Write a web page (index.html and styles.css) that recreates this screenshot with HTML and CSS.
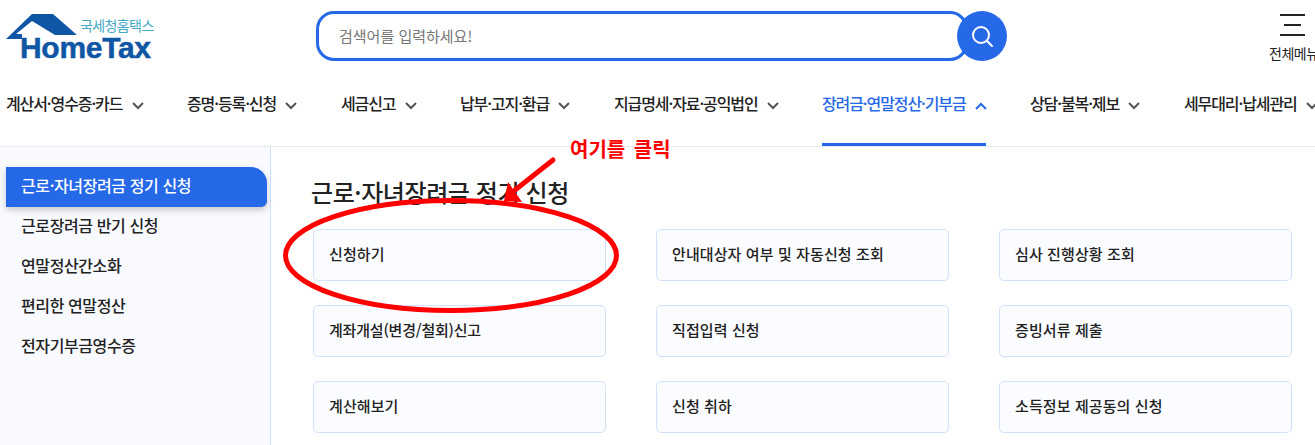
FILE: index.html
```html
<!DOCTYPE html>
<html lang="ko">

<head>
    <meta charset="UTF-8">
    <title>HomeTax</title>
    <link rel="stylesheet" href="styles.css">
</head>

<body>
    <div class="top-bar">
        <div class="logo">
            <svg class="logo-roof" width="72" height="26" viewBox="0 0 72 26">
                <polygon fill="#0f56a4" points="0,25 26,0 47,0 71,21 49,21 26,7 10,20 16,20 16,25"></polygon>
            </svg>
            <span class="logo-sub">국세청홈택스</span>
            <span class="logo-name">HomeTax</span>
        </div>
        <div class="search">
            <div class="search-box">검색어를 입력하세요!</div>
            <div class="search-btn">
                <svg width="24" height="24" viewBox="0 0 24 24" fill="none" stroke="#fff" stroke-width="2">
                    <circle cx="11" cy="11" r="8"></circle>
                    <path d="M17 17l5 5" stroke-linecap="round"></path>
                </svg>
            </div>
        </div>
        <div class="all-menu">
            <div class="burger">
                <span></span>
                <span class="short"></span>
                <span></span>
            </div>
            <div class="all-menu-label">전체메뉴</div>
        </div>
    </div>

    <div class="navigation-bar">
        <a class="nav-item n1">계산서·영수증·카드 <svg class="chev" viewBox="0 0 12 8"><path d="M1 1l5 5 5-5"></path></svg></a>
        <a class="nav-item n2">증명·등록·신청 <svg class="chev" viewBox="0 0 12 8"><path d="M1 1l5 5 5-5"></path></svg></a>
        <a class="nav-item n3">세금신고 <svg class="chev" viewBox="0 0 12 8"><path d="M1 1l5 5 5-5"></path></svg></a>
        <a class="nav-item n4">납부·고지·환급 <svg class="chev" viewBox="0 0 12 8"><path d="M1 1l5 5 5-5"></path></svg></a>
        <a class="nav-item n5">지급명세·자료·공익법인 <svg class="chev" viewBox="0 0 12 8"><path d="M1 1l5 5 5-5"></path></svg></a>
        <a class="nav-item n6 active">장려금·연말정산·기부금 <svg class="chev" viewBox="0 0 12 8"><path d="M1 7l5-5 5 5"></path></svg></a>
        <a class="nav-item n7">상담·불복·제보 <svg class="chev" viewBox="0 0 12 8"><path d="M1 1l5 5 5-5"></path></svg></a>
        <a class="nav-item n8">세무대리·납세관리 <svg class="chev" viewBox="0 0 12 8"><path d="M1 1l5 5 5-5"></path></svg></a>
    </div>

    <div class="container">
        <div class="sidebar">
            <a class="side-item active">근로·자녀장려금 정기 신청</a>
            <a class="side-item">근로장려금 반기 신청</a>
            <a class="side-item">연말정산간소화</a>
            <a class="side-item">편리한 연말정산</a>
            <a class="side-item">전자기부금영수증</a>
        </div>
        <div class="content">
            <h1>근로·자녀장려금 정기 신청</h1>
            <div class="cards">
                <a class="card">신청하기</a>
                <a class="card">안내대상자 여부 및 자동신청 조회</a>
                <a class="card">심사 진행상황 조회</a>
                <a class="card tight">계좌개설(변경/철회)신고</a>
                <a class="card">직접입력 신청</a>
                <a class="card">증빙서류 제출</a>
                <a class="card">계산해보기</a>
                <a class="card">신청 취하</a>
                <a class="card">소득정보 제공동의 신청</a>
            </div>
        </div>
    </div>

    <!-- red markup drawn over the capture -->
    <svg class="markup" width="1315" height="445" viewBox="0 0 1315 445">
        <ellipse cx="451" cy="255.5" rx="165.5" ry="55" fill="none" stroke="#f00" stroke-width="5"></ellipse>
        <path d="M553 160L515 190" stroke="#f00" stroke-width="5" stroke-linecap="round"></path>
        <polygon fill="#f00" points="504,201 508,182 522,202"></polygon>
    </svg>
    <div class="markup-label">여기를 클릭</div>
</body>

</html>
```

FILE: styles.css
```css
* {
    box-sizing: border-box;
}

html,
body {
    margin: 0;
    padding: 0;
    height: 445px;
    overflow: hidden;
}

body {
    background: #fff;
    color: #222;
    font-family: "Noto Sans CJK KR", "Noto Sans", sans-serif;
    position: relative;
}

.top-bar {
    display: flex;
    height: 80px;
    padding-left: 6px;
}

.logo {
    position: relative;
    width: 150px;
    height: 62px;
    margin-top: 13px;
}

.logo-roof {
    position: absolute;
    left: 0;
    top: 1px;
}

.logo-sub {
    position: absolute;
    left: 74px;
    top: 4px;
    font-size: 14px;
    line-height: 16px;
    color: #3fa9c4;
    letter-spacing: -0.6px;
    white-space: nowrap;
}

.logo-name {
    position: absolute;
    left: 14px;
    top: 24px;
    font-family: "Liberation Sans", sans-serif;
    font-size: 30px;
    line-height: 22px;
    font-weight: 700;
    color: #0f56a4;
    letter-spacing: -0.3px;
    -webkit-text-stroke: 0.5px #0f56a4;
    white-space: nowrap;
}

.search {
    display: flex;
    align-items: center;
    margin-left: 164px;
    margin-top: 11px;
    height: 50px;
}

.search-box {
    width: 652px;
    height: 50px;
    border: 3px solid #2568e8;
    border-radius: 18px;
    padding-left: 20px;
    font-size: 15px;
    line-height: 44px;
    color: #777;
}

.search-btn {
    width: 50px;
    height: 50px;
    margin-left: -11px;
    border-radius: 50%;
    background: #2568e8;
    display: flex;
    align-items: center;
    justify-content: center;
}

.all-menu {
    margin-left: 262px;
    width: 46px;
    flex: none;
    padding-top: 14px;
}

.burger {
    width: 25px;
    margin-left: 11px;
}

.burger span {
    display: block;
    height: 2px;
    background: #222;
    margin-bottom: 8px;
}

.burger .short {
    width: 17px;
    margin-left: 4px;
}

.all-menu-label {
    font-size: 14px;
    line-height: 18px;
    margin-top: 3px;
    letter-spacing: -0.5px;
    white-space: nowrap;
}

.navigation-bar {
    display: flex;
    height: 67px;
    padding-left: 6px;
    border-bottom: 1px solid #e8e9ee;
    overflow: hidden;
    white-space: nowrap;
}

.nav-item {
    display: block;
    height: 66px;
    font-size: 16px;
    line-height: 47px;
    font-weight: 500;
    color: #222;
    letter-spacing: -1.1px;
    flex: none;
}

.n1 { width: 181px; }
.n2 { width: 154px; }
.n3 { width: 119px; }
.n4 { width: 154px; }
.n5 { width: 208px; }
.n6 { width: 208px; }
.n7 { width: 154px; }
.n8 { width: 160px; }

.nav-item.active {
    color: #2568e8;
    position: relative;
}

.nav-item.active::after {
    content: "";
    position: absolute;
    left: 0;
    bottom: 0;
    width: 164px;
    height: 3px;
    background: #2568e8;
}

.chev {
    width: 12px;
    height: 8px;
    margin-left: 6px;
    fill: none;
    stroke: #555;
    stroke-width: 2;
}

.active .chev {
    stroke: #2568e8;
}

.container {
    display: flex;
    height: 298px;
}

.sidebar {
    width: 271px;
    background: #f8faff;
    border-right: 1px solid #cfe0ff;
    padding: 20px 3px 0 6px;
}

.side-item {
    display: block;
    height: 40px;
    padding-left: 15px;
    font-size: 16px;
    line-height: 37px;
    font-weight: 500;
    color: #222;
    letter-spacing: -0.4px;
}

.side-item.active {
    background: #2568e8;
    color: #fff;
    border-radius: 0 16px 6px 0;
    box-shadow: 0 3px 6px rgba(0, 0, 0, 0.2);
}

.content {
    flex: 1;
    padding-left: 42px;
}

.content h1 {
    margin: 28px 0 20px -2px;
    font-size: 24px;
    line-height: 34px;
    font-weight: 500;
    color: #222;
    letter-spacing: -0.4px;
}

.cards {
    display: grid;
    grid-template-columns: repeat(3, 293px);
    gap: 24px 50px;
}

.card {
    display: block;
    height: 52px;
    background: #fbfcff;
    border: 1px solid #d3e2fa;
    border-radius: 5px;
    padding-left: 15px;
    font-size: 15px;
    line-height: 48px;
    font-weight: 500;
    color: #222;
    letter-spacing: 0.1px;
}

.card.tight {
    letter-spacing: -0.2px;
}

.markup {
    position: absolute;
    left: 0;
    top: 0;
}

.markup-label {
    position: absolute;
    left: 570px;
    top: 136px;
    font-size: 20px;
    line-height: 26px;
    font-weight: 700;
    color: #f00;
    word-spacing: 3px;
}
```
